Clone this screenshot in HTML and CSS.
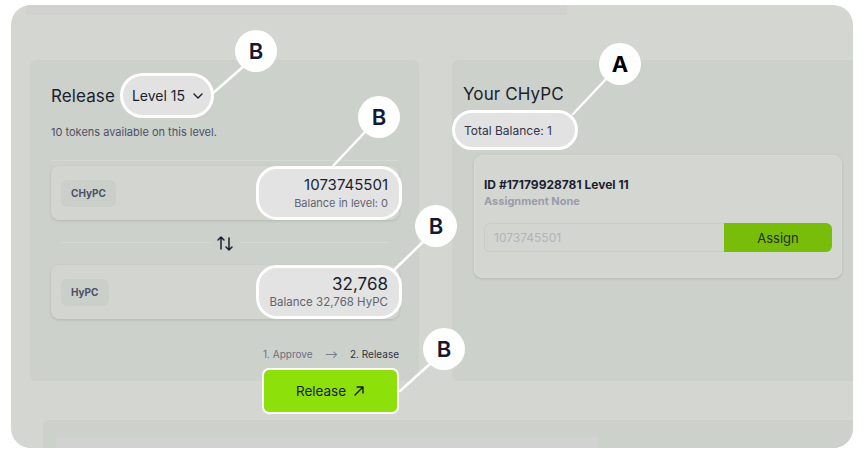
FILE: index.html
```html
<!DOCTYPE html>
<html>
<head>
    <title>Release CHyPC</title>
    <link rel="stylesheet" href="styles.css">
</head>
<body>
    <div class="frame">
        <div class="topstrip"></div>
        <div class="columns">
            <div class="panel left">
                <div class="head-row">
                    <h2>Release</h2>
                    <div class="level-pill">Level 15
                        <svg class="chev" width="10" height="6" viewBox="0 0 10 6"><path d="M1 1l4 4 4-4" fill="none" stroke="#1b1e2e" stroke-width="1.4" stroke-linecap="round" stroke-linejoin="round"/></svg>
                    </div>
                </div>
                <p class="hint">10 tokens available on this level.</p>
                <div class="divider"></div>
                <div class="token-row first">
                    <span class="badge">CHyPC</span>
                    <div class="amount-pill">
                        <div class="amount">1073745501</div>
                        <div class="sub">Balance in level: 0</div>
                    </div>
                </div>
                <div class="swap">
                    <svg width="18" height="18" viewBox="0 0 18 18"><path d="M5 15V3M2 6l3-3 3 3" fill="none" stroke="#1b1e2e" stroke-width="1.5" stroke-linecap="round" stroke-linejoin="round"/><path d="M13 4v12M10 13l3 3 3-3" fill="none" stroke="#1b1e2e" stroke-width="1.5" stroke-linecap="round" stroke-linejoin="round"/></svg>
                </div>
                <div class="token-row second">
                    <span class="badge">HyPC</span>
                    <div class="amount-pill">
                        <div class="amount big">32,768</div>
                        <div class="sub">Balance 32,768 HyPC</div>
                    </div>
                </div>
                <div class="steps"><span>1. Approve</span><span class="arrow">&#10230;</span><span class="now">2. Release</span></div>
                <button class="release-btn">Release
                    <svg width="12" height="12" viewBox="0 0 12 12"><path d="M2 10L10 2M4 2h6v6" fill="none" stroke="#1b1e2e" stroke-width="1.4" stroke-linecap="round" stroke-linejoin="round"/></svg>
                </button>
            </div>
            <div class="panel right">
                <h2>Your CHyPC</h2>
                <div class="total-pill">Total Balance: 1</div>
                <div class="card">
                    <div class="card-title">ID #17179928781 Level 11</div>
                    <div class="card-sub">Assignment None</div>
                    <div class="assign-row">
                        <input type="text" placeholder="1073745501">
                        <button class="assign-btn">Assign</button>
                    </div>
                </div>
            </div>
        </div>
        <div class="bottom-panel"><div class="bottom-strip"></div></div>
    </div>

    <svg class="lines" width="864" height="454">
        <g stroke="#fff" stroke-width="2.5" stroke-linecap="round">
            <line x1="244" y1="66" x2="212" y2="94"/>
            <line x1="366" y1="131" x2="333" y2="166"/>
            <line x1="424" y1="241" x2="393" y2="271"/>
            <line x1="431" y1="363" x2="400" y2="391"/>
            <line x1="607" y1="78" x2="573" y2="114"/>
        </g>
    </svg>
    <div class="callout b1">B</div>
    <div class="callout b2">B</div>
    <div class="callout b3">B</div>
    <div class="callout b4">B</div>
    <div class="callout a1">A</div>
</body>
</html>
```

FILE: styles.css
```css
body {
    margin: 0;
    background-color: #fff;
    font-family: Inter, "Noto Sans", sans-serif;
    color: #1b1e2e;
    width: 864px;
    height: 454px;
    overflow: hidden;
    position: relative;
}
.frame {
    margin: 5px 11px 0 11px;
    height: 443px;
    background-color: #d4d6d1;
    border-radius: 20px;
    overflow: hidden;
    display: flex;
    flex-direction: column;
}
.topstrip {
    height: 10px;
    margin-left: 15px;
    width: 541px;
    background-color: #d1d2d0;
}
.columns {
    display: flex;
    gap: 33px;
    margin-top: 45px;
    padding-left: 19px;
}
.panel {
    background-color: #cdd1cb;
    border-radius: 6px;
    height: 321px;
    box-sizing: border-box;
}
.left {
    width: 389px;
    padding: 13px 20px 0 21px;
}
.right {
    flex: 1;
    border-radius: 6px 0 0 6px;
    padding: 24px 0 0 11px;
}
h2 {
    margin: 0;
    font-size: 17px;
    font-weight: 400;
    letter-spacing: 0.1px;
}
.head-row {
    display: flex;
    align-items: center;
    gap: 5px;
    height: 45px;
}
.level-pill {
    display: flex;
    align-items: center;
    gap: 8px;
    height: 45px;
    width: 94px;
    box-sizing: border-box;
    padding: 0 0 0 9px;
    border: 3px solid #fff;
    border-radius: 23px;
    background-color: #e2e2e2;
    font-size: 14px;
}
.chev { margin-top: 1px; }
.hint {
    margin: 7px 0 0 0;
    font-size: 11px;
    color: #4b5068;
    line-height: 14px;
}
.divider {
    height: 1px;
    background-color: #d6d8d4;
    margin-top: 21px;
}
.token-row {
    height: 54px;
    display: flex;
    align-items: center;
    justify-content: space-between;
    background-color: #d3d5d0;
    border-radius: 8px;
    box-shadow: 0 1px 3px rgba(0,0,0,0.12);
    padding-left: 10px;
}
.token-row.first { margin-top: 5px; }
.badge {
    background-color: #cbcfca;
    border-radius: 6px;
    padding: 8px 10px;
    font-size: 10px;
    font-weight: 700;
    color: #4b5068;
    line-height: 11px;
}
.amount-pill {
    margin-right: -3px;
    height: 54px;
    width: 146px;
    box-sizing: border-box;
    border: 3px solid #fff;
    border-radius: 21px;
    background-color: #e3e3e3;
    padding: 6px 11px 0 6px;
    text-align: right;
    white-space: nowrap;
}
.amount {
    font-size: 15px;
    line-height: 20px;
}
.amount.big { font-size: 17px; }
.sub {
    font-size: 11px;
    color: #62656f;
    line-height: 16px;
}
.second .sub { font-size: 11.5px; }
.swap {
    height: 45px;
    display: flex;
    align-items: center;
    justify-content: center;
    position: relative;
}
.swap::before {
    content: "";
    position: absolute;
    left: 10px;
    right: 10px;
    top: 22px;
    height: 1px;
    background-color: #d6d8d4;
}
.swap svg {
    position: relative;
    background-color: #cdd1cb;
    padding: 0 6px;
}
.steps {
    display: flex;
    justify-content: flex-end;
    gap: 12px;
    margin-top: 28px;
    font-size: 10px;
    color: #6b6f80;
    line-height: 14px;
}
.steps .now { color: #2d3144; }
.release-btn {
    display: flex;
    align-items: center;
    justify-content: center;
    gap: 7px;
    margin: 7px 0 0 auto;
    width: 137px;
    height: 46px;
    background-color: #8ee00a;
    border: 2.5px solid #fff;
    border-radius: 7px;
    font-family: inherit;
    font-size: 13.5px;
    color: #1b1e2e;
}
.total-pill {
    margin: 6px 0 0 -11px;
    width: 126px;
    height: 40px;
    box-sizing: border-box;
    border: 3px solid #fff;
    border-radius: 20px;
    background-color: #e2e2e2;
    display: flex;
    align-items: center;
    padding-left: 9px;
    font-size: 12px;
    color: #30334a;
}
.card {
    margin: 5px 0 0 11px;
    width: 368px;
    height: 123px;
    box-sizing: border-box;
    background-color: #d4d6d1;
    border: 1px solid #d8dad5;
    border-radius: 8px;
    box-shadow: 0 1px 3px rgba(0,0,0,0.12);
    padding: 20px 9px 0 9px;
}
.card-title {
    font-size: 12px;
    font-weight: 700;
    line-height: 17px;
}
.card-sub {
    font-size: 11px;
    font-weight: 700;
    color: #9a9cab;
    line-height: 16px;
}
.assign-row {
    display: flex;
    margin-top: 14px;
    height: 29px;
}
.assign-row input {
    flex: 1;
    min-width: 0;
    box-sizing: border-box;
    border: 1px solid #c9cdc7;
    border-right: none;
    border-radius: 6px 0 0 6px;
    background-color: #d3d5d0;
    padding: 0 9px;
    font-family: inherit;
    font-size: 12px;
}
.assign-row input::placeholder { color: #b0b3c0; }
.assign-btn {
    width: 108px;
    border: none;
    border-radius: 0 6px 6px 0;
    background-color: #78bd0a;
    font-family: inherit;
    font-size: 13px;
    color: #25301a;
}
.bottom-panel {
    margin: 39px 0 0 32px;
    flex: 1;
    background-color: #cdd1cb;
    border-radius: 6px 0 0 0;
    padding: 17px 0 0 13px;
}
.bottom-strip {
    width: 542px;
    height: 100%;
    background-color: #d2d2d2;
}
.lines {
    position: absolute;
    left: 0;
    top: 0;
    pointer-events: none;
}
.callout {
    position: absolute;
    width: 42px;
    height: 42px;
    border-radius: 50%;
    background-color: #fff;
    color: #141a33;
    font-size: 22px;
    font-weight: 600;
    line-height: 42px;
    text-align: center;
}
.b1 { left: 235px; top: 30px; }
.b2 { left: 358px; top: 96px; }
.b3 { left: 415px; top: 205px; }
.b4 { left: 423px; top: 328px; }
.a1 { left: 599px; top: 43px; color: #000; font-weight: 700; }
```
